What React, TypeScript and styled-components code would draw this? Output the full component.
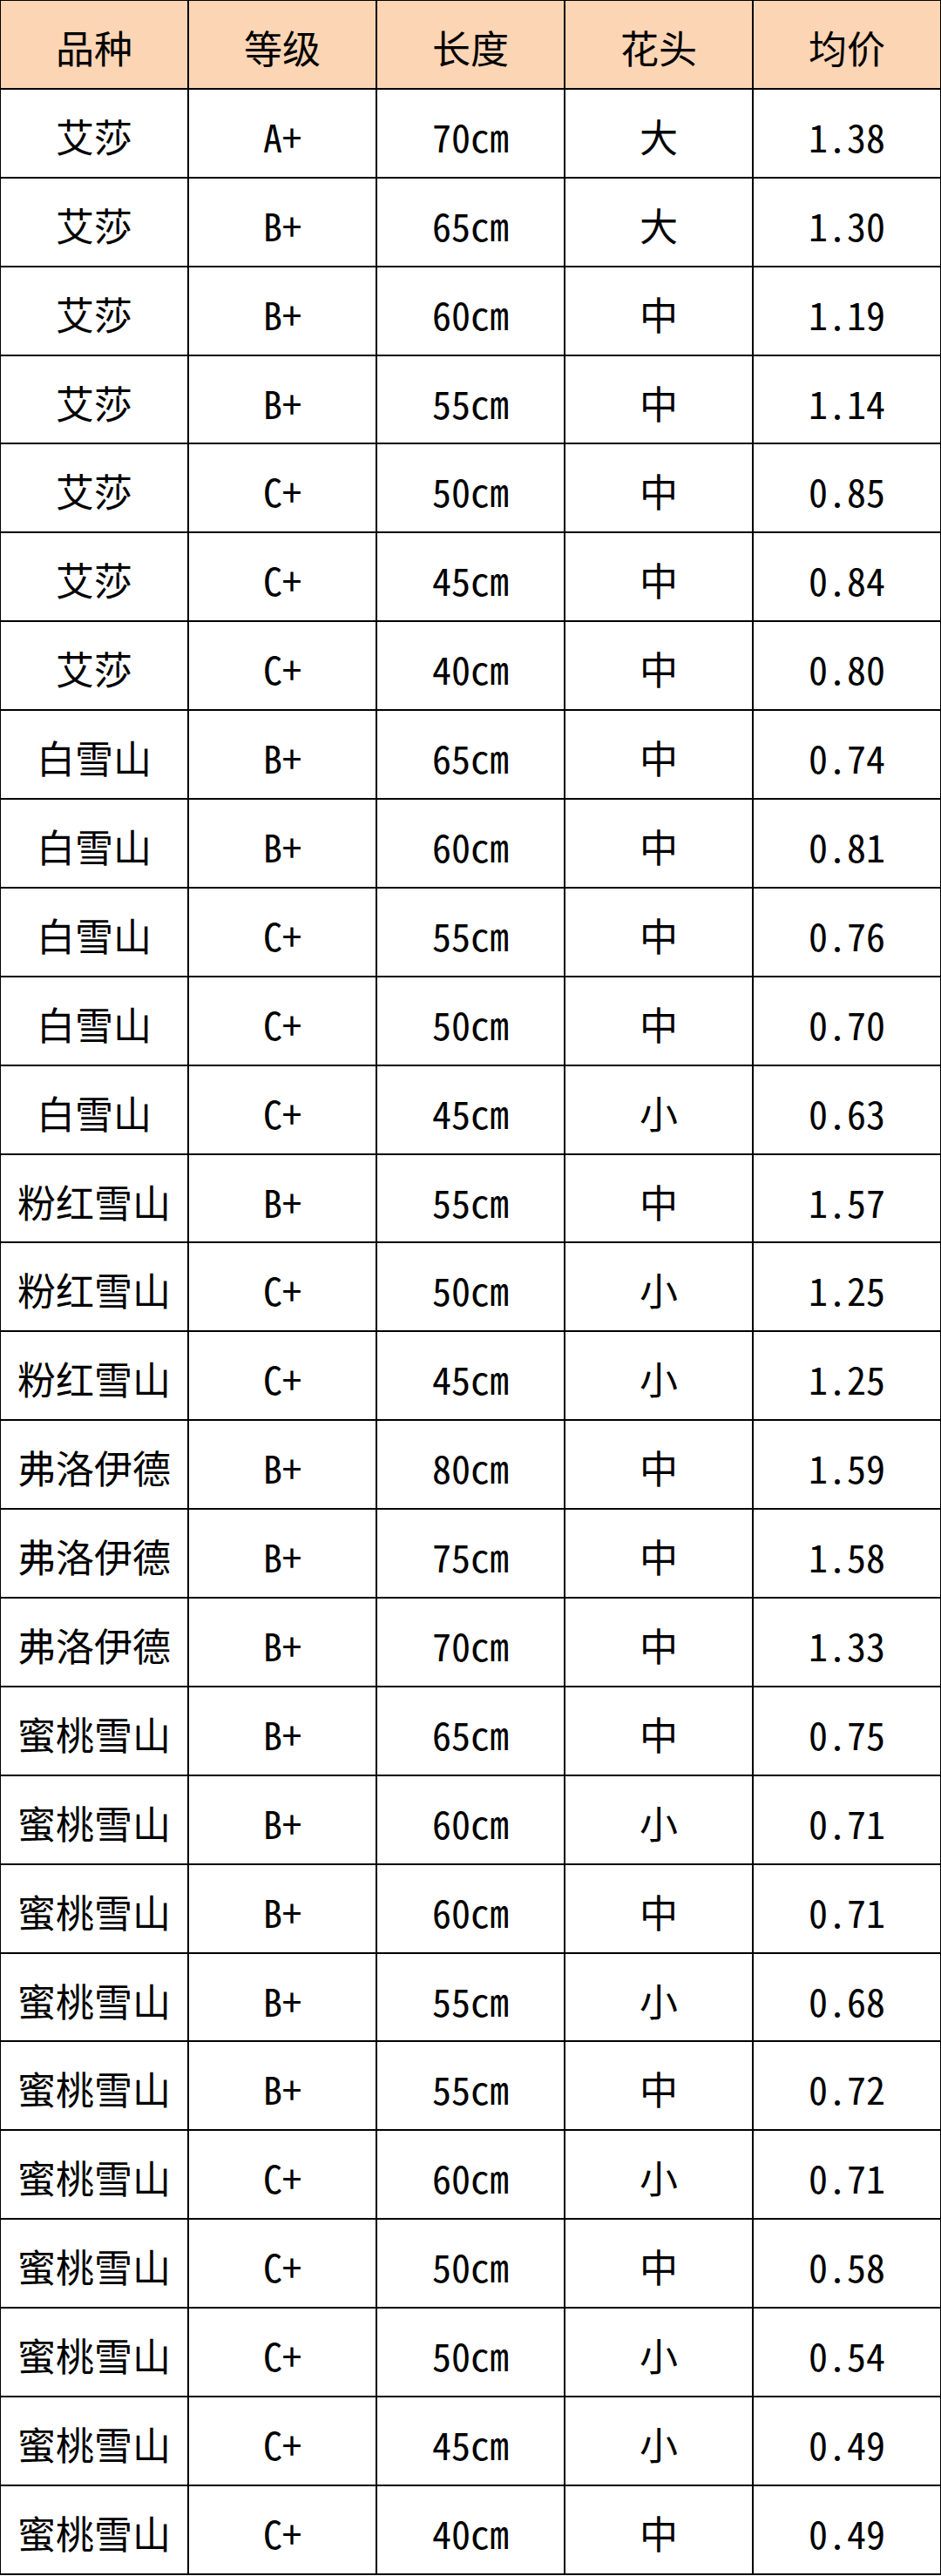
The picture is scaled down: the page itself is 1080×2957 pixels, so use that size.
import styled, { createGlobalStyle } from "styled-components"

const GlobalStyle = createGlobalStyle`
  html, body {
    margin: 0;
    padding: 0;
    background: #ffffff;
  }
`

type Row = [string, string, string, string, string]

const headers: Row = ["品种", "等级", "长度", "花头", "均价"]

const rows: Row[] = [
  ["艾莎", "A+", "70cm", "大", "1.38"],
  ["艾莎", "B+", "65cm", "大", "1.30"],
  ["艾莎", "B+", "60cm", "中", "1.19"],
  ["艾莎", "B+", "55cm", "中", "1.14"],
  ["艾莎", "C+", "50cm", "中", "0.85"],
  ["艾莎", "C+", "45cm", "中", "0.84"],
  ["艾莎", "C+", "40cm", "中", "0.80"],
  ["白雪山", "B+", "65cm", "中", "0.74"],
  ["白雪山", "B+", "60cm", "中", "0.81"],
  ["白雪山", "C+", "55cm", "中", "0.76"],
  ["白雪山", "C+", "50cm", "中", "0.70"],
  ["白雪山", "C+", "45cm", "小", "0.63"],
  ["粉红雪山", "B+", "55cm", "中", "1.57"],
  ["粉红雪山", "C+", "50cm", "小", "1.25"],
  ["粉红雪山", "C+", "45cm", "小", "1.25"],
  ["弗洛伊德", "B+", "80cm", "中", "1.59"],
  ["弗洛伊德", "B+", "75cm", "中", "1.58"],
  ["弗洛伊德", "B+", "70cm", "中", "1.33"],
  ["蜜桃雪山", "B+", "65cm", "中", "0.75"],
  ["蜜桃雪山", "B+", "60cm", "小", "0.71"],
  ["蜜桃雪山", "B+", "60cm", "中", "0.71"],
  ["蜜桃雪山", "B+", "55cm", "小", "0.68"],
  ["蜜桃雪山", "B+", "55cm", "中", "0.72"],
  ["蜜桃雪山", "C+", "60cm", "小", "0.71"],
  ["蜜桃雪山", "C+", "50cm", "中", "0.58"],
  ["蜜桃雪山", "C+", "50cm", "小", "0.54"],
  ["蜜桃雪山", "C+", "45cm", "小", "0.49"],
  ["蜜桃雪山", "C+", "40cm", "中", "0.49"],
]

const Sheet = styled.div`
  width: 1080px;
  box-sizing: border-box;
  display: grid;
  grid-template-columns: 214px 214px 214px 214px 214px;
  grid-auto-rows: 99.9px;
  gap: 2px;
  padding: 1px 1px 2px 1px;
  background: #000000;
`

const Cell = styled.div<{ $head?: boolean; $latin?: boolean }>`
  display: flex;
  align-items: center;
  justify-content: center;
  padding-top: 6px;
  box-sizing: border-box;
  background: ${(p) => (p.$head ? "#fcd5b4" : "#ffffff")};
  color: #000000;
  font-family: ${(p) =>
    p.$latin
      ? `"Noto Sans Mono CJK SC", "DejaVu Sans Mono", monospace`
      : `"Noto Sans CJK SC", "Noto Sans", sans-serif`};
  font-size: 44px;
  line-height: 1;
  white-space: pre;
`

export default function App() {
  return (
    <>
      <GlobalStyle />
      <Sheet>
        {headers.map((h) => (
          <Cell key={h} $head>
            {h}
          </Cell>
        ))}
        {rows.map((r, i) =>
          r.map((v, j) => (
            <Cell key={`${i}-${j}`} $latin={j === 1 || j === 2 || j === 4}>
              {v}
            </Cell>
          ))
        )}
      </Sheet>
    </>
  )
}
